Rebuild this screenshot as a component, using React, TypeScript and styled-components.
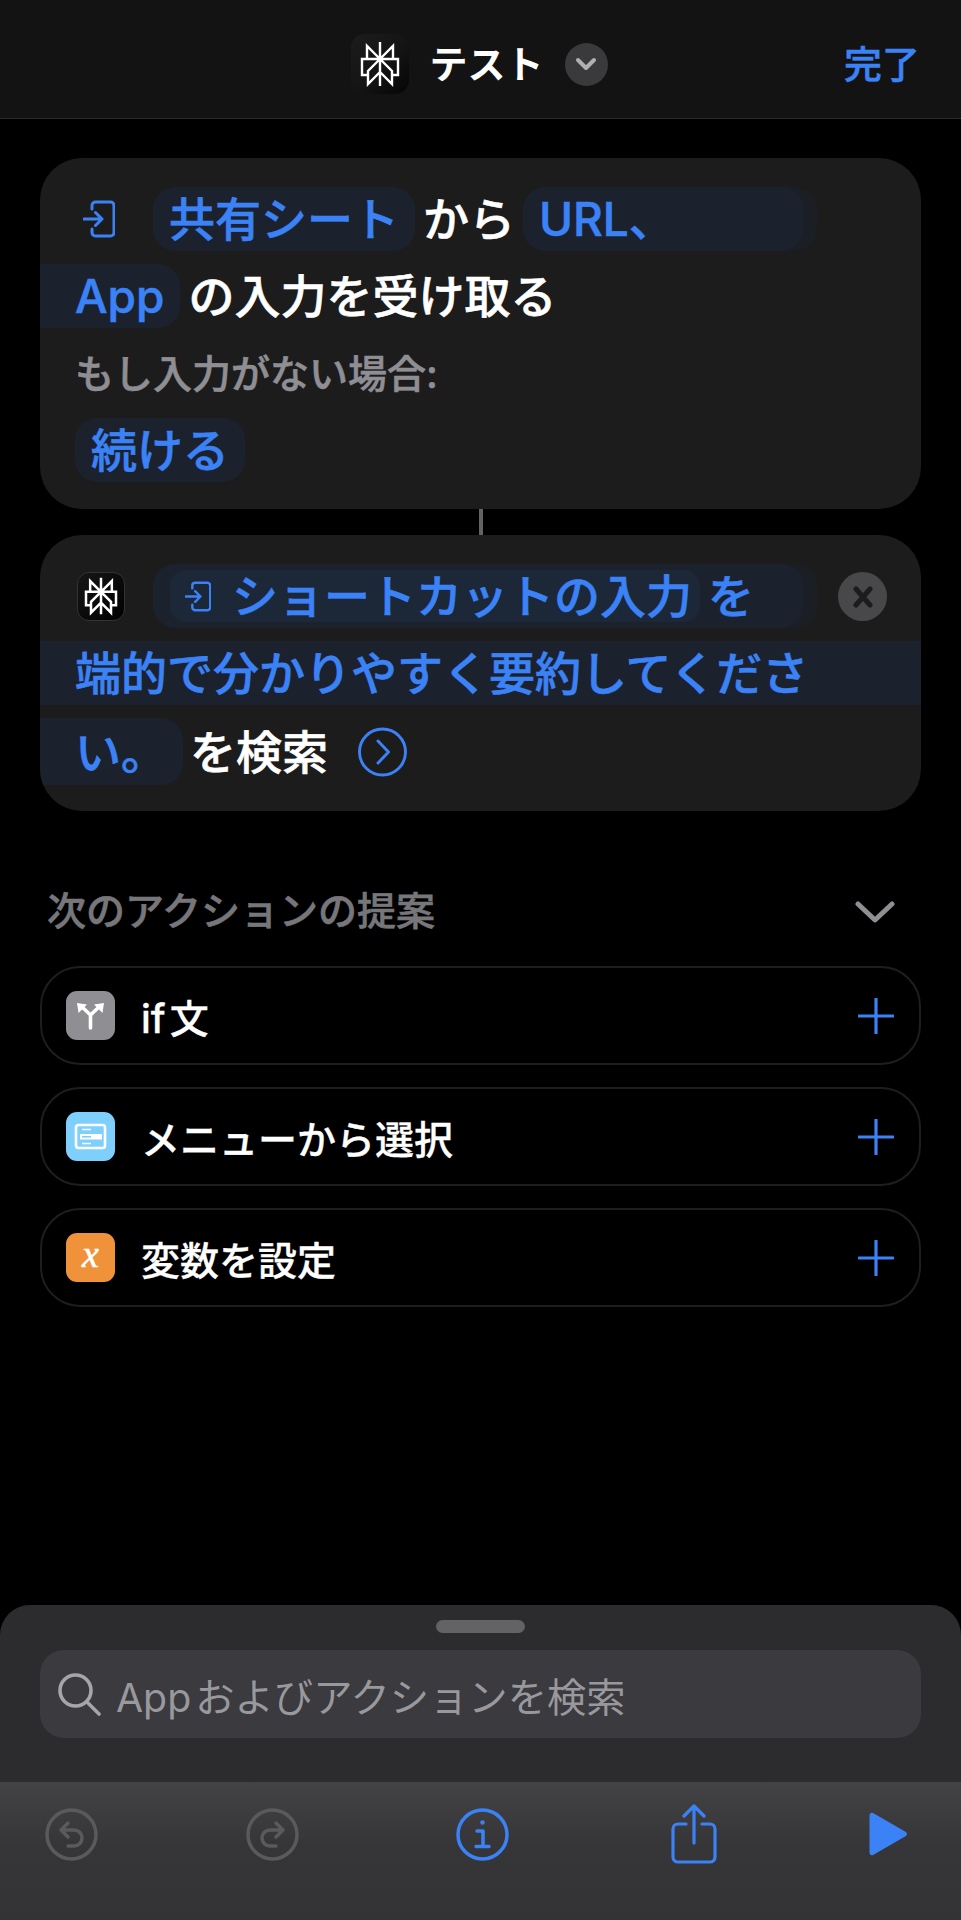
import React from "react";
import styled, { createGlobalStyle } from "styled-components";

const BLUE = "#3b82f6";
const FONT = `"Inter", "Noto Sans CJK JP", sans-serif`;

const Global = createGlobalStyle`
  html, body { margin: 0; padding: 0; background: #000; }
  * { box-sizing: border-box; }
`;

const Screen = styled.div`
  width: 961px;
  height: 1920px;
  background: #000;
  display: flex;
  flex-direction: column;
  overflow: hidden;
  font-family: ${FONT};
  color: #fff;
`;

const Header = styled.header`
  height: 119px;
  flex: none;
  background: #131313;
  border-bottom: 1px solid #2a2a2a;
  position: relative;
  display: flex;
  align-items: center;
  justify-content: center;
  padding: 10px 2px 0 0;
`;

const TitleGroup = styled.div`
  display: flex;
  align-items: center;
`;

const HeaderLogo = styled.div`
  width: 58px;
  height: 60px;
  border-radius: 14px;
  background: linear-gradient(135deg, #1c1c1c 0%, #141414 55%, #050505 100%);
  display: flex;
  align-items: center;
  justify-content: center;
  margin-right: 20px;
`;

const Title = styled.div`
  font-size: 38px;
  font-weight: 700;
  line-height: 44px;
  margin-right: 21px;
`;

const TitleChevron = styled.div`
  width: 43px;
  height: 43px;
  border-radius: 50%;
  background: #3a3a3c;
  display: flex;
  align-items: center;
  justify-content: center;
`;

const Done = styled.div`
  position: absolute;
  right: 41px;
  top: 41px;
  font-size: 38px;
  line-height: 46px;
  font-weight: 500;
  -webkit-text-stroke: 0.5px ${BLUE};
  color: ${BLUE};
`;

const Main = styled.main`
  padding: 39px 40px 0;
  display: flex;
  flex-direction: column;
`;

const Card = styled.section`
  background: #1c1c1d;
  border-radius: 42px;
  padding: 29px 0 27px;
  display: flex;
  flex-direction: column;
  gap: 13px;
  overflow: hidden;
`;

const Line = styled.div<{ $inset?: number }>`
  min-height: 64px;
  display: flex;
  align-items: center;
  padding-left: ${(p) => p.$inset ?? 0}px;
  font-size: 46px;
  font-weight: 500;
  -webkit-text-stroke: 0.6px currentColor;
  line-height: 64px;
  white-space: nowrap;
`;

const Chip = styled.span<{ $width?: number; $fade?: boolean; $bleed?: boolean; $tall?: boolean }>`
  display: inline-flex;
  align-items: center;
  height: ${(p) => (p.$tall ? 67 : 64)}px;
  padding: 0 16px;
  ${(p) => (p.$width ? `width: ${p.$width}px;` : "")}
  color: ${BLUE};
  background: #1c222d;
  border-radius: 22px;
  ${(p) => (p.$fade ? "box-shadow: 14px 0 0 #1b1e24;" : "")}
  ${(p) => (p.$bleed ? "border-radius: 0 22px 22px 0; padding: 0 16px 0 35px;" : "")}
`;

const Word = styled.span<{ $left?: number; $right?: number }>`
  margin-left: ${(p) => p.$left ?? 0}px;
  margin-right: ${(p) => p.$right ?? 0}px;
`;

const InnerToken = styled.span`
  display: inline-flex;
  align-items: center;
  height: 52px;
  padding: 0 8px 0 15px;
  gap: 21px;
  border-radius: 16px;
  background: #1c2738;
  color: ${BLUE};
  margin-left: 1px;
`;

const Band = styled.div`
  height: 64px;
  background: #1c222d;
  color: ${BLUE};
  padding-left: 35px;
  font-size: 46px;
  font-weight: 500;
  -webkit-text-stroke: 0.6px currentColor;
  line-height: 64px;
  white-space: nowrap;
`;

const Label = styled.div`
  margin: 6px 0 4px 35px;
  font-size: 39px;
  font-weight: 500;
  -webkit-text-stroke: 0.6px currentColor;
  line-height: 54px;
  color: #8e8e93;
`;

const Connector = styled.div`
  width: 4px;
  height: 26px;
  background: #636366;
  align-self: center;
`;

const ActionLogo = styled.div`
  width: 48px;
  height: 49px;
  border-radius: 12px;
  background: linear-gradient(135deg, #161616, #000);
  border: 1px solid #333;
  display: flex;
  align-items: center;
  justify-content: center;
  margin: 0 28px 0 37px;
`;

const CloseButton = styled.div`
  width: 49px;
  height: 49px;
  border-radius: 50%;
  background: #48484a;
  display: flex;
  align-items: center;
  justify-content: center;
  position: absolute;
  right: 34px;
  top: 37px;
`;

const CardTwo = styled(Card)`
  position: relative;
  padding-bottom: 26px;
`;

const SectionHead = styled.div`
  display: flex;
  align-items: center;
  justify-content: space-between;
  padding: 46px 26px 0 7px;
  height: 155px;
`;

const SectionTitle = styled.div`
  font-size: 39px;
  font-weight: 500;
  -webkit-text-stroke: 0.6px currentColor;
  color: #77777b;
  margin-top: -8px;
`;

const RowList = styled.div`
  display: flex;
  flex-direction: column;
  gap: 22px;
`;

const Row = styled.div`
  height: 99px;
  border: 2px solid #1e1e20;
  border-radius: 40px;
  display: flex;
  align-items: center;
  padding: 0 25px 0 24px;
  font-size: 39px;
  font-weight: 500;
  -webkit-text-stroke: 0.3px currentColor;
`;

const RowIcon = styled.div<{ $color: string }>`
  width: 49px;
  height: 49px;
  border-radius: 11px;
  background: ${(p) => p.$color};
  display: flex;
  align-items: center;
  justify-content: center;
  margin-right: 26px;
  flex: none;
`;

const RowLabel = styled.div`
  flex: 1;
`;

const Latin = styled.span`
  margin-right: 4px;
`;

const VarGlyph = styled.span`
  font-family: "Liberation Serif", serif;
  font-style: italic;
  font-weight: 400;
  font-size: 38px;
  line-height: 40px;
  color: #fff;
  margin-top: -8px;
  -webkit-text-stroke: 0.6px #fff;
`;

const Sheet = styled.div`
  margin-top: auto;
  height: 315px;
  flex: none;
  background: #2c2c2e;
  border-radius: 30px 30px 0 0;
  display: flex;
  flex-direction: column;
`;

const Handle = styled.div`
  width: 89px;
  height: 13px;
  border-radius: 7px;
  background: #636366;
  align-self: center;
  margin-top: 15px;
`;

const SearchBar = styled.div`
  margin: 17px 40px 0;
  height: 88px;
  border-radius: 24px;
  background: #3a3a3f;
  display: flex;
  align-items: center;
  padding-left: 18px;
  gap: 15px;
  color: #98989d;
  font-size: 39.3px;
  font-weight: 400;
`;

const Toolbar = styled.div`
  margin-top: auto;
  height: 138px;
  background: linear-gradient(180deg, #434345 0%, #363638 45%, #333335 100%);
  display: flex;
  align-items: center;
  padding: 0 0 34px 45px;
`;

const ToolSlot = styled.div<{ $left?: number }>`
  display: flex;
  margin-left: ${(p) => p.$left ?? 0}px;
`;

const Logo = ({ size, stroke = 1.5 }: { size: number; stroke?: number }) => (
  <svg width={size} height={size} viewBox="0 0 24 24" fill="none" stroke="#fff" strokeWidth={stroke} strokeLinejoin="miter">
    <path d="M12 1v22M12 9.5 5.5 3v6.5h13V3L12 9.5M5.5 9.5H3v8h3M18.5 9.5H21v8h-3M12 9.5 6 15.5V22l6-6M12 9.5l6 6V22l-6-6" />
  </svg>
);

const InputIcon = ({ w, h }: { w: number; h: number }) => (
  <svg width={w} height={h} viewBox="0 0 32 38" fill="none" stroke={BLUE} strokeWidth={3} strokeLinecap="round" strokeLinejoin="round">
    <path d="M9 9V5.5A3.5 3.5 0 0 1 12.5 2h15A3.5 3.5 0 0 1 31 5.5v27a3.5 3.5 0 0 1-3.5 3.5h-15A3.5 3.5 0 0 1 9 32.5V29" />
    <path d="M1 19h18M12.5 12.5 19 19l-6.5 6.5" />
  </svg>
);

const Plus = () => (
  <svg width="36" height="36" viewBox="0 0 36 36" stroke={BLUE} strokeWidth={3.2} strokeLinecap="round">
    <path d="M18 1v34M1 18h34" />
  </svg>
);

const Undo = ({ flip }: { flip?: boolean }) => (
  <svg width="53" height="53" viewBox="0 0 53 53" fill="none" stroke="#5a5a5c" strokeWidth={3.5} strokeLinecap="round" strokeLinejoin="round">
    <g transform={flip ? "translate(53 0) scale(-1 1)" : undefined}>
      <circle cx="26.5" cy="26.5" r="24.5" />
      <path d="M23 15l-7 7 7 7M16 22h13a8 8 0 0 1 0 16h-6" />
    </g>
  </svg>
);

export default function App() {
  return (
    <Screen>
      <Global />
      <Header>
        <TitleGroup>
          <HeaderLogo>
            <Logo size={48} stroke={1.2} />
          </HeaderLogo>
          <Title>テスト</Title>
          <TitleChevron>
            <svg width="24" height="16" viewBox="0 0 24 16" fill="none" stroke="#b0b0b4" strokeWidth={4} strokeLinecap="round" strokeLinejoin="round">
              <path d="M4 4l8 8 8-8" />
            </svg>
          </TitleChevron>
        </TitleGroup>
        <Done>完了</Done>
      </Header>
      <Main>
        <Card>
          <Line $inset={43}>
            <InputIcon w={32} h={38} />
            <Word $left={38} />
            <Chip>共有シート</Chip>
            <Word $left={8} $right={8}>から</Word>
            <Chip $width={280} $fade>URL、</Chip>
          </Line>
          <Line>
            <Chip $bleed>App</Chip>
            <Word $left={8}>の入力を受け取る</Word>
          </Line>
          <Label>もし入力がない場合:</Label>
          <Line $inset={35}>
            <Chip>続ける</Chip>
          </Line>
        </Card>
        <Connector />
        <CardTwo>
          <Line>
            <ActionLogo>
              <Logo size={40} stroke={1.5} />
            </ActionLogo>
            <Chip $width={650} $fade>
              <InnerToken>
                <InputIcon w={26} h={31} />
                ショートカットの入力
              </InnerToken>
              <Word $left={8}>を</Word>
            </Chip>
          </Line>
          <CloseButton>
            <svg width="22" height="22" viewBox="0 0 22 22" stroke="#1c1c1e" strokeWidth={5} strokeLinecap="round">
              <path d="M4 3l14 16M18 3 4 19" />
            </svg>
          </CloseButton>
          <Band>端的で分かりやすく要約してくださ</Band>
          <Line>
            <Chip $bleed $tall>い。</Chip>
            <Word $left={7} $right={30}>を検索</Word>
            <svg width="49" height="50" viewBox="0 0 49 50" fill="none" stroke={BLUE} strokeWidth={3} strokeLinecap="round" strokeLinejoin="round">
              <circle cx="24.5" cy="25" r="23" />
              <path d="M20 14l10.5 11L20 36" />
            </svg>
          </Line>
        </CardTwo>
        <SectionHead>
          <SectionTitle>次のアクションの提案</SectionTitle>
          <svg width="40" height="22" viewBox="0 0 40 22" fill="none" stroke="#8e8e93" strokeWidth={5} strokeLinecap="round" strokeLinejoin="round">
            <path d="M3 3l17 16L37 3" />
          </svg>
        </SectionHead>
        <RowList>
          <Row>
            <RowIcon $color="#8e8e93">
              <svg width="49" height="49" viewBox="0 0 49 49">
                <path d="M24.5 37V24L15 15M24.5 24 34 15" fill="none" stroke="#fff" strokeWidth={3.6} strokeLinecap="round" strokeLinejoin="round" />
                <path d="M11 12l10 1.5-8.5 8.5zM38 12l-10 1.5 8.5 8.5z" fill="#fff" />
              </svg>
            </RowIcon>
            <RowLabel><Latin>if</Latin>文</RowLabel>
            <Plus />
          </Row>
          <Row>
            <RowIcon $color="#7fcffc">
              <svg width="49" height="49" viewBox="0 0 49 49" fill="none" stroke="#fff" strokeWidth={2.6}>
                <rect x="10" y="13" width="29" height="23" rx="2.5" />
                <path d="M16 17.5h9M16 31.5h9" strokeWidth={1.6} />
                <rect x="14" y="22" width="22" height="5.5" fill="#fff" stroke="none" />
                <rect x="16" y="24" width="9" height="1.6" fill="#7fcffc" stroke="none" />
              </svg>
            </RowIcon>
            <RowLabel>メニューから選択</RowLabel>
            <Plus />
          </Row>
          <Row>
            <RowIcon $color="#ef9239">
              <VarGlyph>x</VarGlyph>
            </RowIcon>
            <RowLabel>変数を設定</RowLabel>
            <Plus />
          </Row>
        </RowList>
      </Main>
      <Sheet>
        <Handle />
        <SearchBar>
          <svg width="43" height="43" viewBox="0 0 43 43" fill="none" stroke="#a5a5aa" strokeWidth={3.6} strokeLinecap="round">
            <circle cx="17.5" cy="17.5" r="15.5" />
            <path d="M29 29l12 12" />
          </svg>
          <span><Latin>App</Latin>およびアクションを検索</span>
        </SearchBar>
        <Toolbar>
          <ToolSlot>
            <Undo />
          </ToolSlot>
          <ToolSlot $left={148}>
            <Undo flip />
          </ToolSlot>
          <ToolSlot $left={157}>
            <svg width="53" height="53" viewBox="0 0 53 53" fill="none" stroke={BLUE} strokeWidth={3.5} strokeLinecap="round" strokeLinejoin="round">
              <circle cx="26.5" cy="26.5" r="24.5" />
              <path d="M21 23h6v15M20 38.5h13" />
              <circle cx="26.5" cy="14.5" r="2.2" fill={BLUE} stroke="none" />
            </svg>
          </ToolSlot>
          <ToolSlot $left={162}>
            <svg width="46" height="60" viewBox="0 0 46 60" fill="none" stroke={BLUE} strokeWidth={3.2} strokeLinecap="round" strokeLinejoin="round">
              <path d="M15 20H7a5 5 0 0 0-5 5v28a5 5 0 0 0 5 5h32a5 5 0 0 0 5-5V25a5 5 0 0 0-5-5h-8" />
              <path d="M23 39V2M13 12 23 2l10 10" />
            </svg>
          </ToolSlot>
          <ToolSlot $left={151}>
            <svg width="40" height="44" viewBox="0 0 39 44" fill={BLUE}>
              <path d="M1 3.5C1 1 3 0 5 1.2l32 18.6c2 1.2 2 3.2 0 4.4L5 42.8C3 44 1 43 1 40.5z" />
            </svg>
          </ToolSlot>
        </Toolbar>
      </Sheet>
    </Screen>
  );
}
